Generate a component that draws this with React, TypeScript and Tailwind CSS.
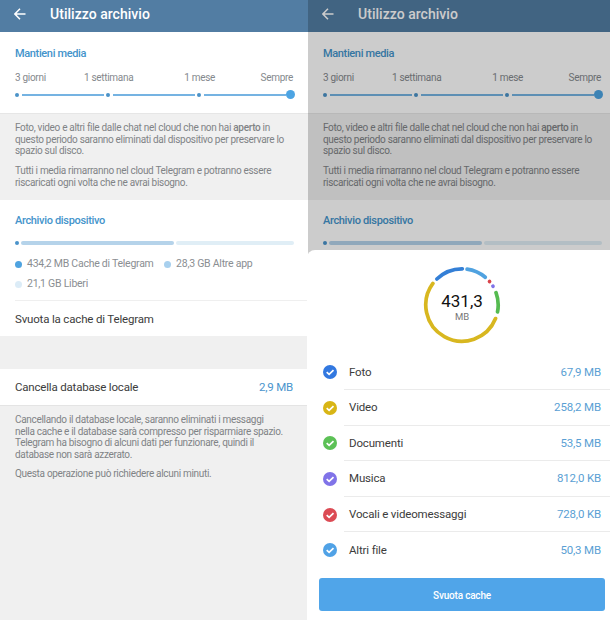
import clsx from 'clsx';

interface Category {
  label: string;
  size: string;
  color: string;
}

const categories: Category[] = [
  { label: 'Foto', size: '67,9 MB', color: '#3278e0' },
  { label: 'Video', size: '258,2 MB', color: '#d8b515' },
  { label: 'Documenti', size: '53,5 MB', color: '#5cc156' },
  { label: 'Musica', size: '812,0 KB', color: '#8073e8' },
  { label: 'Vocali e videomessaggi', size: '728,0 KB', color: '#dc4b54' },
  { label: 'Altri file', size: '50,3 MB', color: '#50a2e6' },
];

// start / end angles in degrees, clockwise from the top
const segments = [
  { from: 8, to: 40, color: '#50a2e0' },
  { from: 49.5, to: 49.6, color: '#d9434a' },
  { from: 58.7, to: 58.8, color: '#8073e8' },
  { from: 70, to: 101, color: '#55bb50' },
  { from: 112, to: 306.5, color: '#d8b720' },
  { from: 316, to: 360.5, color: '#347fd6' },
];

function arcPath(from: number, to: number, r: number) {
  const point = (deg: number) => {
    const a = ((deg - 90) * Math.PI) / 180;
    return `${(r * Math.cos(a)).toFixed(2)} ${(r * Math.sin(a)).toFixed(2)}`;
  };
  return `M${point(from)}A${r} ${r} 0 ${to - from > 180 ? 1 : 0} 1 ${point(to)}`;
}

function Header() {
  return (
    <header className="flex h-8 shrink-0 items-center bg-[#527da3] pb-[5px] pl-[14px] text-white shadow-[0_1px_1px_rgba(0,0,0,0.25)]">
      <svg width="12" height="12" viewBox="0 0 12 12" fill="none" stroke="currentColor" strokeWidth="1.5">
        <path d="M11.5 6H1M6 .8.9 6 6 11.2" />
      </svg>
      <h1 className="ml-6 text-[14px] leading-4 font-medium tracking-[0.03px]">Utilizzo archivio</h1>
    </header>
  );
}

function KeepMediaSlider() {
  return (
    <section className="h-[81px] shrink-0 bg-white px-[15px] pt-[15px]">
      <h2 className="h-[14px] text-[11px] leading-[14px] font-medium tracking-[-0.36px] text-[#4494cb]">
        Mantieni media
      </h2>
      <div className="mt-[11px] flex h-3 text-[10px] leading-3 tracking-[-0.3px] text-[#85898d]">
        <span className="w-[69px]">3 giorni</span>
        <span className="w-[100.5px]">1 settimana</span>
        <span className="w-[76.5px]">1 mese</span>
        <span>Sempre</span>
      </div>
      <div className="mt-[6px] flex h-[9px] w-[280px] items-center">
        {[0, 1, 2].map((i) => (
          <div key={i} className="flex w-[91px] shrink-0 items-center">
            <span className="size-1 rounded-full bg-[#4b93c8]" />
            <span className="mr-[2.5px] ml-[2.5px] h-[2px] flex-1 bg-[#75b3e2]" />
          </div>
        ))}
        <span className="-ml-[2.5px] size-[9px] shrink-0 rounded-full bg-[#4ca4e3]" />
      </div>
    </section>
  );
}

function Legend({ dot, children }: { dot: string; children: string }) {
  return (
    <span className="flex items-center gap-[5px]">
      <span className={clsx('size-[7px] rounded-full', dot)} />
      {children}
    </span>
  );
}

function StorageScreen({ compact = false }: { compact?: boolean }) {
  return (
    <div className="flex h-[620px] w-[308px] shrink-0 flex-col bg-[#f0f0f0]">
      <Header />
      <KeepMediaSlider />
      <div className="h-[87px] shrink-0 border-t border-[#e6e6e6] pt-[8px] pl-[15px] text-[10px] leading-[11.7px] tracking-[-0.31px] whitespace-nowrap text-[#808386]">
        <p>
          Foto, video e altri file dalle chat nel cloud che non hai <b className="font-medium">aperto</b> in
          <br />
          questo periodo saranno eliminati dal dispositivo per preservare lo
          <br />
          spazio sul disco.
        </p>
        <p className="mt-2">
          Tutti i media rimarranno nel cloud Telegram e potranno essere
          <br />
          riscaricati ogni volta che ne avrai bisogno.
        </p>
      </div>
      <section className="h-[136px] shrink-0 bg-white pt-[14px] pl-[15px]">
        <h2 className="h-[14px] text-[11px] leading-[14px] font-medium tracking-[-0.33px] text-[#4494cb]">
          Archivio dispositivo
        </h2>
        <div className="mt-[13px] flex h-1 gap-[2px]">
          <span className="w-1 rounded-full bg-[#4a93ca]" />
          <span className="w-[153px] rounded-xs bg-[#b5d3ea]" />
          <span className="w-[118px] rounded-xs bg-[#e0eef6]" />
        </div>
        {!compact && (
          <>
            <div className="mt-[12px] flex h-[38px] flex-wrap content-between gap-x-[10.5px] pb-[4px] text-[10.5px] leading-[14px] tracking-[-0.25px] text-[#8a8e92]">
              <Legend dot="bg-[#4fa3e0]">434,2 MB Cache di Telegram</Legend>
              <Legend dot="bg-[#a8d0ee]">28,3 GB Altre app</Legend>
              <Legend dot="bg-[#dcecf7]">21,1 GB Liberi</Legend>
            </div>
            <div className="mt-[5px] border-t border-[#efefef] pt-[11px] text-[11.5px] leading-[15px] tracking-[-0.17px] text-[#3c3c3c]">
              Svuota la cache di Telegram
            </div>
          </>
        )}
      </section>
      {!compact && (
        <>
          <div className="h-[33px] shrink-0" />
          <div className="flex h-9 shrink-0 items-center justify-between bg-white pt-px pr-[15px] pl-[15px] text-[11.5px] tracking-[-0.19px] text-[#3c3c3c]">
            <span>Cancella database locale</span>
            <span className="text-[#4a95cd]">2,9 MB</span>
          </div>
          <div className="border-t border-[#e4e4e4] pt-[8px] pl-[15px] text-[10px] leading-[11.6px] tracking-[-0.31px] whitespace-nowrap text-[#808386]">
            <p>
              Cancellando il database locale, saranno eliminati i messaggi
              <br />
              nella cache e il database sarà compresso per risparmiare spazio.
              <br />
              Telegram ha bisogno di alcuni dati per funzionare, quindi il
              <br />
              database non sarà azzerato.
            </p>
            <p className="mt-2">Questa operazione può richiedere alcuni minuti.</p>
          </div>
        </>
      )}
    </div>
  );
}

function UsageChart() {
  return (
    <div className="relative ml-[116px] size-[78px]">
      <svg width="78" height="78" viewBox="-39 -39 78 78" fill="none">
        {segments.map((s) => (
          <path key={s.from} d={arcPath(s.from, s.to, 36.2)} stroke={s.color} strokeWidth="3.7" strokeLinecap="round" />
        ))}
      </svg>
      <div className="absolute inset-0 flex flex-col items-center pt-[25px]">
        <span className="text-[17px] leading-[20px] text-[#111]">431,3</span>
        <span className="text-[9.5px] leading-[12px] tracking-[-0.2px] text-[#777]">MB</span>
      </div>
    </div>
  );
}

function CategoryRow({ category, last }: { category: Category; last: boolean }) {
  return (
    <li className="flex h-[35.6px] items-center pl-4">
      <svg width="14" height="14" viewBox="0 0 14 14" fill="none">
        <circle cx="7" cy="7" r="7" fill={category.color} />
        <path d="M3.7 7.2 6.1 9.4l4.4-4.3" stroke="#fff" strokeWidth="1.7" />
      </svg>
      <div
        className={clsx(
          'ml-[7px] flex h-full flex-1 items-center justify-between border-b pt-px pr-[9px] pl-[5px] text-[11.5px] tracking-[-0.16px] text-[#3c3c3c]',
          last ? 'border-transparent' : 'border-[#ebebeb]',
        )}
      >
        <span>{category.label}</span>
        <span className="text-[#5a9fd4]">{category.size}</span>
      </div>
    </li>
  );
}

function ClearCacheSheet() {
  return (
    <div className="absolute top-[250px] right-0 bottom-0 -left-px rounded-tl-lg bg-white pt-[15.5px]">
      <UsageChart />
      <ul className="mt-[11px]">
        {categories.map((c, i) => (
          <CategoryRow key={c.label} category={c} last={i === categories.length - 1} />
        ))}
      </ul>
      <button
        type="button"
        className="mt-[10px] ml-3 flex h-[33px] w-[286px] items-center justify-center rounded-[3px] bg-[#50a5e9] pt-px text-[10px] font-medium tracking-[-0.2px] text-white"
      >
        Svuota cache
      </button>
    </div>
  );
}

export default function App() {
  return (
    <main className="flex h-[620px] w-[610px] overflow-hidden font-['Roboto',sans-serif]">
      <StorageScreen />
      <div className="relative w-[302px] shrink-0">
        <div className="h-full overflow-hidden">
          <StorageScreen compact />
        </div>
        <div className="absolute inset-0 bg-black/20" />
        <ClearCacheSheet />
      </div>
    </main>
  );
}
